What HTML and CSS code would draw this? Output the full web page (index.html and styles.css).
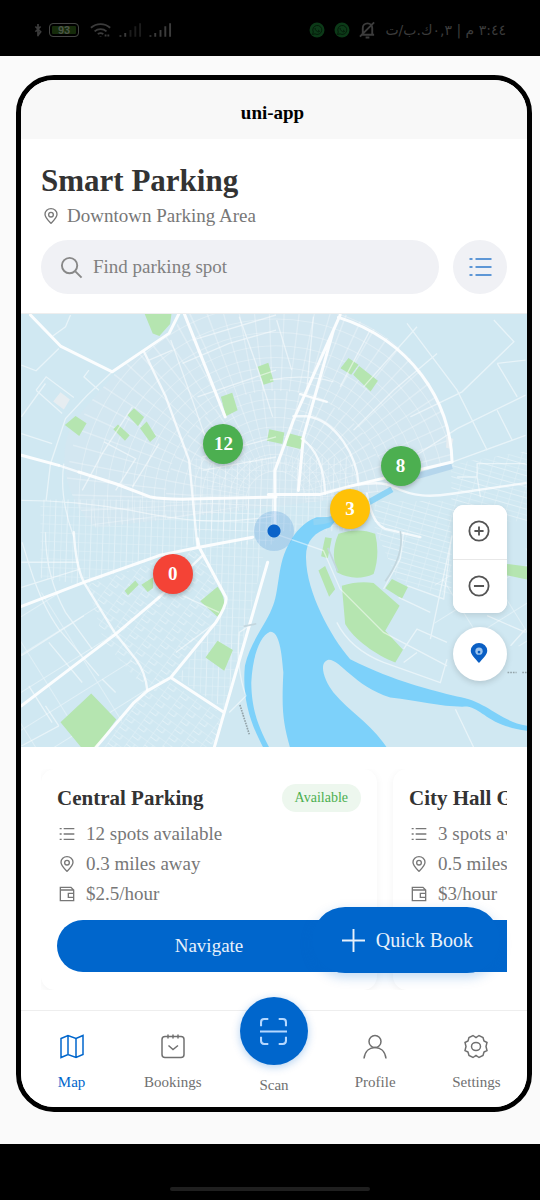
FILE: index.html
```html
<!DOCTYPE html>
<html lang="en">
<head>
<meta charset="utf-8">
<meta name="viewport" content="width=device-width, initial-scale=1">
<title>Smart Parking</title>
<link rel="stylesheet" href="styles.css">
</head>
<body>
<svg class="sprite" aria-hidden="true">
  <symbol id="i-list" viewBox="0 0 24 24"><path d="M1 4h3M1 12h3M1 20h3M7 4h16M7 12h16M7 20h16"/></symbol>
  <symbol id="i-pin" viewBox="0 0 24 24"><path d="M12 23C7 18 3 14.500 3 9.500a9 8.500 0 0 1 18 0C21 14.500 17 18 12 23Z"/><circle cx="12" cy="10" r="3.500"/></symbol>
  <symbol id="i-wallet" viewBox="0 0 24 24"><path d="M2 2h16l4 4v16H2ZM2 6h20M22 11h-8v6h8"/></symbol>
</svg>

<header class="status">
  <div class="status-side">
    <svg class="s-bolt" viewBox="0 0 8 16"><path d="M4 1v14M1 4l6 6-3 4M7 4 1 10"/></svg>
    <span class="battery">93</span>
    <svg class="s-wifi" viewBox="0 0 24 18"><path d="M1 6.500a16 16 0 0 1 21 0M5 10.500a10 10 0 0 1 13 0M8.500 13.500a5 5 0 0 1 6 0"/><path d="M11.500 16v.5M17 14v2M20 14v2"/></svg>
    <svg class="s-signal weak" viewBox="0 0 24 16"><path d="M1.500 13.500v1.500M6.500 11v4"/><path class="off" d="M12 8v7M17 4v11M22 1v14"/></svg>
    <svg class="s-signal" viewBox="0 0 24 16"><path d="M1.500 13.500v1.500M6.500 11v4M12 8v7M17 4v11M22 1v14"/></svg>
  </div>
  <div class="status-side right">
    <svg class="s-chat" viewBox="0 0 16 16"><circle cx="8" cy="8" r="7.500"/><path d="m3.500 12.500.8-2.500A4.500 4.500 0 1 1 6 11.800ZM6 6c0 2 2 4 4 4l.5-1-1.500-1"/></svg>
    <svg class="s-chat" viewBox="0 0 16 16"><circle cx="8" cy="8" r="7.500"/><path d="m3.500 12.500.8-2.500A4.500 4.500 0 1 1 6 11.800ZM6 6c0 2 2 4 4 4l.5-1-1.500-1"/></svg>
    <svg class="s-bell" viewBox="0 0 18 18"><path d="M2 14h14M4 13V7a5 5 0 0 1 10 0v6M7 17h4M16 1 1 16"/></svg>
    <span class="status-text" lang="ar" dir="rtl">٣:٤٤ م | ٠,٣ك.ب/ت</span>
  </div>
</header>

<main class="stage">
  <div class="phone">
    <div class="appbar">uni-app</div>

    <section class="head">
      <h1 class="title">Smart Parking</h1>
      <p class="area"><svg class="ico"><use href="#i-pin"/></svg>Downtown Parking Area</p>
      <div class="search-row">
        <label class="search">
          <svg class="search-ico" viewBox="0 0 24 24"><circle cx="10" cy="10" r="8"/><path d="m16 16 6.500 6.500"/></svg>
          <input class="search-input" type="text" placeholder="Find parking spot" aria-label="Find parking spot">
        </label>
        <button class="round-btn" aria-label="List view"><svg class="list-ico"><use href="#i-list"/></svg></button>
      </div>
    </section>

    <section class="map" aria-label="Map">
      <svg class="map-art" viewBox="0 0 1518 1296" preserveAspectRatio="xMidYMid slice" aria-hidden="true">
        <defs>
          <pattern id="grid-a" width="46" height="30" patternUnits="userSpaceOnUse" patternTransform="rotate(36)"><path class="fine" d="M0 0h46M0 0v30M23 0v15M0 15h23"/></pattern>
          <pattern id="grid-b" width="36" height="26" patternUnits="userSpaceOnUse" patternTransform="rotate(2)"><path class="fine" d="M0 0h36M0 0v26M18 0v26"/></pattern>
          <pattern id="grid-c" width="38" height="32" patternUnits="userSpaceOnUse" patternTransform="rotate(16)"><path class="fine" d="M0 0h38M0 0v32M0 16h38"/></pattern>
          <pattern id="grid-d" width="130" height="96" patternUnits="userSpaceOnUse" patternTransform="rotate(-32)"><path class="lane" d="M0 0h130M0 0v96"/></pattern>
          <clipPath id="fan"><path d="M225 640C140 560 100 430 160 320L290 170 450 60 490 0H970C1200 100 1290 270 1292 443L1150 520 900 560Z"/></clipPath>
        </defs>
        <rect class="land" width="1518" height="1296"/>
        <g clip-path="url(#fan)">
          <path class="tint" d="M0 0h1518v700H0Z"/>
          <circle class="spokes" cx="765" cy="560" r="210"/>
          <circle class="spokes wide" cx="765" cy="560" r="480"/>
          <g class="rings">
            <circle cx="765" cy="560" r="90"/><circle cx="765" cy="560" r="115"/><circle cx="765" cy="560" r="140"/><circle cx="765" cy="560" r="168"/><circle cx="765" cy="560" r="195"/><circle cx="765" cy="560" r="222"/><circle cx="765" cy="560" r="250"/><circle cx="765" cy="560" r="280"/><circle cx="765" cy="560" r="305"/><circle cx="765" cy="560" r="335"/><circle cx="765" cy="560" r="365"/><circle cx="765" cy="560" r="400"/><circle cx="765" cy="560" r="430"/><circle cx="765" cy="560" r="465"/><circle cx="765" cy="560" r="505"/><circle cx="765" cy="560" r="545"/><circle cx="765" cy="560" r="590"/>
          </g>
        </g>
        <path fill="url(#grid-b)" d="M60 555H760V690L520 690 190 810 60 790Z"/>
        <path fill="url(#grid-b)" d="M520 430H1000V650H520Z"/>
        <path fill="url(#grid-a)" d="M200 810 530 700 620 860 450 1090 370 1120 250 980Z"/>
        <path fill="url(#grid-a)" d="M440 1100 610 1200 580 1296H250L340 1160Z"/>
        <path fill="url(#grid-b)" d="M540 700 740 670 680 930 610 1180 470 1090 620 860Z"/>
        <path fill="url(#grid-c)" d="M1060 560 1290 560 1290 850 1130 800 1060 640Z"/>
        <path fill="url(#grid-c)" d="M1290 450 1518 410V620H1290Z"/>
        <path fill="url(#grid-d)" d="M0 840 200 820 390 1130 230 1296H0Z"/>
        <path fill="url(#grid-d)" d="M1240 800 1518 700V1000L1240 940Z"/>

        <g class="park">
          <path d="M372 0h80l-4 30-32 36-20-8ZM133 332l32-27 33 22-22 38ZM278 345l14-14 35 32-14 16ZM320 302l20-20 30 26-18 28ZM358 342l20-20 28 45-18 16ZM600 248l34-12 16 52-35 18ZM710 158l32-12 16 56-30 10Z"/>
          <path d="m958 162 24-30 30 20-22 30ZM996 182l18-26 56 44-22 32ZM745 345l45 10-6 34-46-10ZM800 356l46 12-8 36-42-10Z"/>
          <path d="m312 828 32-30 10 12-32 32ZM362 810l35-22v32l-16 12ZM538 860l52-44q30 40 15 70l-15 20ZM590 978l46 28-26 62-56-40ZM120 1222l92-86 75 78-60 82h-46Z"/>
          <path class="plaza" d="m98 262 22-28 28 22-18 30ZM1276 366l20 8-6 30-16-4Z"/>
        </g>
        <g transform="translate(747 633)">
          <g class="park">
            <path d="M205 25Q265 5 315 25 330 90 310 145 255 170 200 140 180 80 205 25ZM165 35l20 3-12 60-20-6ZM145 135l20-14 30 70-18 22ZM215 180Q265 165 310 172L388 240 345 315 398 372 375 410C320 390 250 340 225 295ZM345 188l20-28 48 24-18 35ZM708 115l66 8v40l-66-14Z"/>
          </g>
          <path class="water" d="M60 50C20 110 30 200 5 250-15 300-60 350-75 420-85 520-55 600-20 665H-2C-30 610-55 560-56 470-52 390-30 330 0 318 28 316 35 380 40 440 34 560 40 590 60 665H350C300 590 240 560 190 500 160 460 145 410 175 402 210 400 250 480 360 515 450 525 520 545 590 542 640 550 650 600 775 615V600C690 590 650 525 560 512 480 490 380 470 240 400 180 330 110 200 108 100 105 50 130 20 180 5L205-25 140-25C100-10 75 20 60 50Z"/>
          <path class="canal" d="M130-10Q200-15 270-55L365-108"/>
          <path class="canal pale" d="M430-145 545-178"/>
        </g>

        <g class="lane">
          <g transform="translate(-15 -12)">
            <path d="M165 15 150 50 112 78M18 165 62 182 130 115M62 240 92 200 175 262M62 240 140 310M290 185 215 255 150 325 105 460 92 570M220 180 205 200 250 240M465 90 530 270 575 400M670 20 720 160 770 320M530 90 780 15M18 570Q200 570 400 610T780 615M18 370 110 400M18 320 90 220M145 460Q130 560 175 680M265 395 360 445 300 540M200 540 260 430 350 290M430 400 350 530M470 120 400 150M500 160 640 100 780 60M545 260 780 180M560 440 780 380M560 480 780 440"/>
          </g>
          <g transform="translate(747 -12)">
            <path d="M20 30 65 180M130 20 110 240M0 210Q100 190 190 215M90 250 170 275M410 40 560 240 650 420M680 160 740 260M670 30 730 95 575 245 420 320M765 255 560 355 430 440M680 300 725 390M765 375 545 455M765 150 680 160M500 130 370 240 250 360M300 60 210 230M440 50 280 230M620 500V460h145M560 500h60l10 60"/>
          </g>
          <g transform="translate(-15 633)">
            <path d="M20 50 45 130Q80 240 130 310L250 450M90 20Q90 150 150 260L230 370M18 110H190M18 185 195 130M18 390 205 270M40 480 110 590M100 350 200 470M18 660 130 600M300 500 260 460M130 600 90 540M700 300 670 320Q660 430 690 510L640 560M480 380 600 290M500 210 610 260"/>
          </g>
          <g transform="translate(747 633)">
            <path d="M0 20 160 75 210 190 340 320 530 420M200 290Q240 370 340 410L510 470 530 400M400 370 440 310 530 350M410 180 520 220 540 60M480 340 545 30M400 20 390 100 340 190M385 215 480 260M555 550 610 665M650 270 765 320M720 360 765 310M400 410 440 380"/>
          </g>
        </g>
        <g class="road">
          <g transform="translate(-15 -12)">
            <path d="M45 15 135 108 290 185 460 70 495 0M505 10 628 320M18 435 130 465M190 485 300 520 405 560Q440 567 520 566L780 560"/>
            <path class="mid" d="M385 125 450 260 520 450 540 660 545 710M130 465 190 485"/>
          </g>
          <g transform="translate(747 -12)">
            <path d="M15 660V480L70 330 190 60M205 22C420 90 540 270 545 455L250 525 150 552H-5M210 15 190 60 100 380 85 540"/>
            <path class="mid" d="M70 318H110C200 330 260 440 265 520M95 385Q160 430 165 550M250 525Q340 510 370 530C430 560 480 560 545 550L765 518M290 550Q305 640 345 655L450 680M90 252 170 275"/>
          </g>
          <g transform="translate(-15 633)">
            <path d="M18 242 205 170 430 90 550 65 710 35M18 540 300 325 430 215M545 40 550 65 630 215Q635 235 600 290L465 455 395 495 355 530 240 665M755 110 700 300 625 560 595 665M465 455 625 560"/>
            <path class="mid" d="M430 215 560 90M175 20Q180 120 205 170L300 325 360 400Q390 440 395 495"/>
          </g>
        </g>
        <path class="rail" d="M1137 650Q1150 720 1092 800M920 700 950 770M668 935l38-8"/>
        <path class="tiny" d="m657 1170 28 88M1458 1073h27M1502 1073h16"/>
      </svg>

      <span class="here" aria-label="Your location"></span>
      <button class="pin green p12">12</button>
      <button class="pin green p8">8</button>
      <button class="pin amber p3">3</button>
      <button class="pin red p0">0</button>

      <div class="controls">
        <div class="zoom">
          <button class="zoom-btn" aria-label="Zoom in"><svg viewBox="0 0 24 24"><circle cx="12" cy="12" r="10.500"/><path d="M12 7v10M7 12h10"/></svg></button>
          <button class="zoom-btn" aria-label="Zoom out"><svg viewBox="0 0 24 24"><circle cx="12" cy="12" r="10.500"/><path d="M6.500 12h11"/></svg></button>
        </div>
        <button class="locate" aria-label="My location"><svg viewBox="0 0 24 24"><path class="fill" d="M12 23C8 18 3 14 3 9.500a9 8.500 0 0 1 18 0C21 14 16 18 12 23Z"/><circle class="hole" cx="12" cy="10" r="4"/><circle class="fill" cx="12" cy="11" r="1.500"/></svg></button>
      </div>
    </section>

    <section class="list">
      <div class="cards">
        <article class="card">
          <div class="card-top"><h2 class="card-title">Central Parking</h2><span class="badge">Available</span></div>
          <ul class="facts">
            <li><svg class="ico"><use href="#i-list"/></svg>12 spots available</li>
            <li><svg class="ico"><use href="#i-pin"/></svg>0.3 miles away</li>
            <li><svg class="ico"><use href="#i-wallet"/></svg>$2.5/hour</li>
          </ul>
          <button class="navigate">Navigate</button>
        </article>
        <article class="card">
          <div class="card-top"><h2 class="card-title">City Hall Garage</h2></div>
          <ul class="facts">
            <li><svg class="ico"><use href="#i-list"/></svg>3 spots available</li>
            <li><svg class="ico"><use href="#i-pin"/></svg>0.5 miles away</li>
            <li><svg class="ico"><use href="#i-wallet"/></svg>$3/hour</li>
          </ul>
          <button class="navigate" aria-label="Navigate"></button>
        </article>
      </div>
    </section>

    <button class="quick"><svg viewBox="0 0 24 24"><path d="M12 0v24M0 12h24"/></svg>Quick Book</button>

    <nav class="tabs">
      <a class="tab active" href="#map"><svg viewBox="0 0 24 24"><path d="M1 4 8 1l8 3 7-3v19l-7 3-8-3-7 3ZM8 1v19M16 4v19"/></svg>Map</a>
      <a class="tab" href="#bookings"><svg viewBox="0 0 24 24"><rect x="1" y="2" width="22" height="21" rx="3"/><path d="M7 0v4M12 0v4M17 0v4M7.500 11l4.500 4 5-4"/></svg>Bookings</a>
      <a class="tab scan" href="#scan"><span class="scan-disc"><svg viewBox="0 0 26 26"><path d="M1 8V4q0-3 3-3h4M18 1h4q3 0 3 3v4M25 18v4q0 3-3 3h-4M8 25H4q-3 0-3-3v-4M0 13h26"/></svg></span>Scan</a>
      <a class="tab" href="#profile"><svg viewBox="0 0 24 24"><circle cx="12" cy="7" r="6"/><path d="M1 24c1-8 6-11 11-11s10 3 11 11"/></svg>Profile</a>
      <a class="tab" href="#settings"><svg viewBox="0 0 24 24"><path d="m9 1 3 2 3-2 4 2 1 3.500L23 8l-1 4 1 4-3 1.500-1 3.500-4 2-3-2-3 2-4-2-1-3.500L1 16l1-4-1-4 3-1.500L5 3Z"/><ellipse cx="12" cy="12" rx="4.500" ry="4"/></svg>Settings</a>
    </nav>
  </div>
</main>

<footer class="sysbar"><span class="handle"></span></footer>
</body>
</html>
```

FILE: styles.css
```css
* { box-sizing: border-box; }

body {
  margin: 0;
  min-height: 100vh;
  display: flex;
  flex-direction: column;
  background: #fafafa;
  color: #333;
  font-family: "Liberation Serif", "Times New Roman", serif;
  font-size: 19px;
}

h1, h2, p, ul { margin: 0; padding: 0; }
ul { list-style: none; }
button { border: 0; padding: 0; margin: 0; font: inherit; cursor: pointer; }
svg { fill: none; stroke: currentColor; stroke-width: 2; flex: none; }
.sprite { position: absolute; width: 0; height: 0; }

/* system status bar */
.status {
  display: flex;
  justify-content: space-between;
  align-items: center;
  height: 56px;
  padding: 4px 34px 0;
  background: #000;
  color: #3c3c3c;
}
.status-side { display: flex; align-items: center; gap: 7px; }
.status-side.right { gap: 9px; }
.s-bolt { width: 8px; height: 14px; }
.battery {
  width: 30px;
  height: 14px;
  margin-right: 4px;
  border: 1px solid #444;
  border-radius: 4px;
  background: #152b0a;
  box-shadow: inset 0 0 0 2px #000;
  color: #4c5548;
  font: bold 11px/12px "Liberation Sans", sans-serif;
  text-align: center;
}
.s-wifi { width: 22px; height: 18px; }
.s-signal { width: 23px; height: 16px; }
.off { stroke: #1c1c1c; }
.s-chat { width: 16px; height: 16px; fill: #0c3a18; stroke: none; }
.s-chat path { fill: none; stroke: #051b0a; stroke-width: 1; }
.s-bell { width: 17px; height: 18px; }
.status-text { font: 14px/20px "DejaVu Sans", sans-serif; }

/* phone frame */
.stage { flex: 1; display: flex; padding: 19px 8px 32px 16px; }
.phone {
  position: relative;
  flex: 1;
  min-width: 0;
  display: flex;
  flex-direction: column;
  overflow: hidden;
  border: 5px solid #000;
  border-radius: 38px;
  background: #fff;
}
.appbar {
  height: 59px;
  padding: 6px 3px 0 0;
  display: flex;
  align-items: center;
  justify-content: center;
  background: #f8f8f8;
  color: #000;
  font-weight: bold;
}

/* header */
.head { padding: 24px 20px 19px; border-bottom: 1px solid #eee; }
.title { font-size: 31px; line-height: 36px; }
.area {
  display: flex;
  align-items: center;
  gap: 7px;
  padding: 4px 0 11px 1px;
  line-height: 26px;
  color: #777;
}
.ico { width: 18px; height: 16px; }
.search-row { display: flex; gap: 14px; }
.search {
  flex: 1;
  min-width: 0;
  display: flex;
  align-items: center;
  gap: 10px;
  height: 54px;
  padding: 0 19px;
  border-radius: 27px;
  background: #f0f1f5;
  color: #888;
}
.search-ico { width: 23px; height: 23px; }
.search-input {
  flex: 1;
  min-width: 0;
  padding: 0;
  border: 0;
  outline: 0;
  background: none;
  font: inherit;
  color: #333;
}
.search-input::placeholder { color: #808080; opacity: 1; }
.round-btn {
  width: 54px;
  height: 54px;
  display: grid;
  place-items: center;
  border-radius: 50%;
  background: #f0f1f5;
  color: #5e97d6;
}
.list-ico { width: 25px; height: 24px; }

/* map */
.map { position: relative; flex: 1; min-height: 432px; overflow: hidden; }
.map-art { position: absolute; inset: 0; width: 100%; height: 100%; stroke: none; }
.land { fill: #d0e8f2; }
.tint { fill: #d3e7f1; }
.fine { fill: none; stroke: #fff; stroke-opacity: .38; stroke-width: 3; }
.rings { stroke: #fff; stroke-opacity: .28; stroke-width: 3; }
.spokes { stroke: #fff; stroke-opacity: .28; stroke-width: 240; stroke-dasharray: 3 21; }
.spokes.wide { stroke-width: 300; stroke-dasharray: 4 34; }
.lane { fill: none; stroke: #fff; stroke-opacity: .5; stroke-width: 4; }
.road { stroke: #fff; stroke-opacity: .9; stroke-width: 9; stroke-linejoin: round; stroke-linecap: round; }
.road .mid { stroke-opacity: .75; stroke-width: 7; }
.park { fill: #b5e5b0; }
.plaza { fill: #e6edf1; }
.water { fill: #7dd1fa; }
.canal { stroke: #8fd4f5; stroke-width: 18; }
.canal.pale { stroke: #b5d6ec; }
.rail { stroke: #c3d6de; stroke-width: 5; }
.tiny { stroke: #93a3a9; stroke-width: 5; stroke-dasharray: 5 3; }

.pin {
  position: absolute;
  width: 40px;
  height: 40px;
  margin: -20px 0 0 -20px;
  border-radius: 50%;
  color: #fff;
  font-weight: bold;
  box-shadow: 0 2px 5px rgba(0, 0, 0, .25);
}
.green { background: #4caf50; }
.amber { background: #ffc107; }
.red { background: #f44336; }
.p12 { left: 40%; top: 30%; }
.p8 { left: 75%; top: 35%; }
.p3 { left: 65%; top: 45%; }
.p0 { left: 30%; top: 60%; }
.here {
  position: absolute;
  left: 50%;
  top: 50%;
  width: 40px;
  height: 40px;
  margin: -20px 0 0 -20px;
  border-radius: 50%;
  background: radial-gradient(circle, #0a63c9 0 6px, rgba(0, 102, 204, .17) 7px);
}
.controls {
  position: absolute;
  right: 20px;
  bottom: 66px;
  display: flex;
  flex-direction: column;
  gap: 14px;
}
.zoom {
  border-radius: 11px;
  overflow: hidden;
  background: #fff;
  box-shadow: 0 2px 6px rgba(0, 0, 0, .12);
}
.zoom-btn, .locate {
  width: 54px;
  height: 54px;
  display: grid;
  place-items: center;
  padding: 0 2px 2px 0;
  background: #fff;
  color: #555;
}
.zoom-btn + .zoom-btn { border-top: 1px solid #e8e8e8; }
.zoom-btn svg { width: 22px; height: 22px; }
.locate {
  border-radius: 50%;
  color: #0a5fc4;
  box-shadow: 0 2px 6px rgba(0, 0, 0, .15);
}
.locate svg { width: 22px; height: 22px; stroke: none; }
.fill { fill: currentColor; }
.hole { fill: #9cc4ee; }

/* parking cards */
.list { padding: 22px 20px 20px; }
.cards { display: flex; gap: 16px; overflow: hidden; }
.card {
  flex: 0 0 336px;
  padding: 15px 16px 18px;
  border-radius: 14px;
  background: #fff;
  box-shadow: 0 2px 8px rgba(0, 0, 0, .05);
}
.card-top { display: flex; justify-content: space-between; align-items: center; height: 28px; }
.card-title { font-size: 21px; line-height: 28px; white-space: nowrap; }
.badge {
  padding: 0 13px;
  border-radius: 14px;
  background: #edf7ee;
  color: #4caf50;
  font-size: 14px;
  line-height: 28px;
}
.facts { padding: 7px 0 11px; }
.facts li {
  display: flex;
  align-items: center;
  gap: 10px;
  padding-left: 1px;
  line-height: 30px;
  color: #777;
  white-space: nowrap;
}
.navigate {
  display: block;
  width: 100%;
  height: 52px;
  border-radius: 26px;
  background: #0066cc;
  color: #e8f1fb;
}
.card + .card .navigate { border-radius: 0; }

.quick {
  position: absolute;
  right: 27px;
  bottom: 134px;
  display: flex;
  align-items: center;
  gap: 11px;
  height: 66px;
  padding: 0 27px 0 30px;
  border-radius: 33px;
  background: #0066cc;
  color: #e8f1fb;
  font-size: 20px;
  box-shadow: 0 4px 12px rgba(0, 102, 204, .25);
}
.quick svg { width: 23px; height: 23px; }

/* tabs */
.tabs {
  position: relative;
  display: grid;
  grid-template-columns: repeat(5, 1fr);
  height: 97px;
  border-top: 1px solid #eee;
  background: #fff;
}
.tab {
  display: flex;
  flex-direction: column;
  align-items: center;
  gap: 13px;
  padding-top: 23px;
  color: #707070;
  font-size: 15px;
  line-height: 20px;
  text-decoration: none;
}
.tab svg { width: 24px; height: 25px; stroke-width: 1.5; }
.tab.active { color: #0066cc; }
.tab.scan { margin-top: -14px; padding-top: 0; gap: 10px; }
.scan-disc {
  width: 68px;
  height: 68px;
  display: grid;
  place-items: center;
  border-radius: 50%;
  background: #0066cc;
  color: #b5d8ff;
  box-shadow: 0 2px 8px rgba(0, 102, 204, .3);
}
.tab .scan-disc svg { width: 27px; height: 27px; stroke-width: 2; }

/* gesture bar */
.sysbar { display: grid; justify-items: center; height: 56px; padding-top: 43px; background: #000; }
.handle { width: 37%; height: 4px; border-radius: 2px; background: #1f1f1f; }
```
